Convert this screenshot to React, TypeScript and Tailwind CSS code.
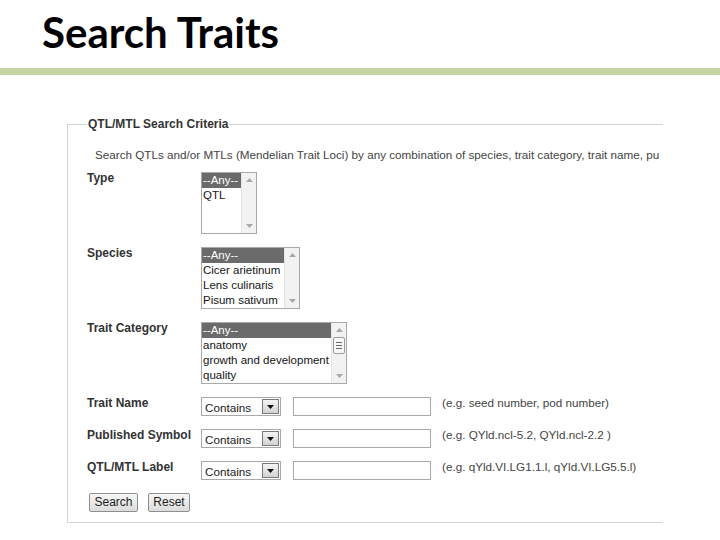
import React from "react";

function Arrow({ down }: { down?: boolean }) {
  return (
    <svg width="7" height="4" viewBox="0 0 7 4">
      {down ? (
        <path d="M0 0 L7 0 L3.5 4Z" fill="#a8a8a8" />
      ) : (
        <path d="M0 4 L3.5 0 L7 4Z" fill="#a8a8a8" />
      )}
    </svg>
  );
}

function Scrollbar({ thumb }: { thumb?: boolean }) {
  return (
    <div className="w-[15px] shrink-0 bg-[#f2f2f2] border-l border-[#e4e4e4] flex flex-col items-center">
      <div className="h-[14px] w-full flex items-center justify-center">
        <Arrow />
      </div>
      {thumb && (
        <div className="w-[12px] h-[17px] border border-[#9c9c9c] rounded-[2px] bg-[#f7f7f7] flex flex-col items-center justify-center gap-[2px]">
          <div className="w-[6px] h-px bg-[#6b6b6b]" />
          <div className="w-[6px] h-px bg-[#6b6b6b]" />
          <div className="w-[6px] h-px bg-[#6b6b6b]" />
        </div>
      )}
      <div className="flex-1" />
      <div className="h-[14px] w-full flex items-center justify-center">
        <Arrow down />
      </div>
    </div>
  );
}

function ListBox({ items, widthClass, thumb }: { items: string[]; widthClass: string; thumb?: boolean }) {
  return (
    <div className={`flex h-[62px] border border-[#a9a9a9] bg-white overflow-hidden ${widthClass}`}>
      <div className="flex-1 flex flex-col min-w-0">
        {items.map((it, i) => (
          <div
            key={it}
            className={`h-[15px] leading-[15px] text-[11.5px] pl-[1px] whitespace-nowrap ${
              i === 0 ? "bg-[#6b6b6b] text-white" : "text-[#151515]"
            }`}
          >
            {it}
          </div>
        ))}
      </div>
      <Scrollbar thumb={thumb} />
    </div>
  );
}

function ContainsSelect() {
  return (
    <div className="w-[80px] h-[19px] border border-[#a9a9a9] bg-white flex items-center justify-between pl-[3px] pr-[1px]">
      <span className="text-[11.7px] leading-[15px] text-[#1a1a1a] mt-[1px]">Contains</span>
      <div className="w-[17px] h-[15px] border border-[#7a7a7a] bg-gradient-to-b from-[#f4f4f4] to-[#d2d2d2] flex items-center justify-center">
        <svg width="7" height="4" viewBox="0 0 7 4">
          <path d="M0 0 L7 0 L3.5 4Z" fill="#111" />
        </svg>
      </div>
    </div>
  );
}

function TextRow({ label, hint }: { label: string; hint: string }) {
  return (
    <div className="flex items-start h-[19px]">
      <div className="w-[114px] shrink-0 text-[12px] leading-[12px] font-bold text-[#333]">{label}</div>
      <ContainsSelect />
      <div className="ml-[12px] w-[138px] h-[19px] border border-[#a9a9a9] bg-white" />
      <div className="ml-[11px] text-[11.7px] leading-[12px] text-[#444] whitespace-nowrap">{hint}</div>
    </div>
  );
}

function ListRow({ label, children }: { label: string; children: React.ReactNode }) {
  return (
    <div className="flex items-start">
      <div className="w-[114px] shrink-0 text-[12px] leading-[12px] font-bold text-[#333]">{label}</div>
      {children}
    </div>
  );
}

export default function App() {
  return (
    <div className="w-[720px] h-[540px] bg-white overflow-hidden font-['Liberation_Sans',Arial,sans-serif]">
      <div className="h-[68px] pl-[42px] pt-[8px]">
        <h1 className="font-['Lato',sans-serif] font-bold text-[42px] leading-[48px] text-black">
          Search Traits
        </h1>
      </div>
      <div className="h-[7px] bg-[#c5d5a4]" />
      <div className="ml-[67px] mt-[42px] w-[596px] overflow-hidden">
        <fieldset className="w-[640px] border border-[#d3d3d3] pl-[19px] pb-[10px]">
          <legend className="px-[1px] text-[12px] leading-[14px] font-bold text-[#333]">
            QTL/MTL Search Criteria
          </legend>
          <div className="flex flex-col gap-[13px]">
            <div className="mt-[16px] mb-[-3px] ml-[8px] w-[568px] overflow-hidden text-[11.7px] leading-[15px] text-[#444] whitespace-nowrap">
              Search QTLs and/or MTLs (Mendelian Trait Loci) by any combination of species, trait category, trait name, pu
            </div>
            <ListRow label="Type">
              <ListBox widthClass="w-[56px]" items={["--Any--", "QTL"]} />
            </ListRow>
            <ListRow label="Species">
              <ListBox
                widthClass="w-[99px]"
                items={["--Any--", "Cicer arietinum", "Lens culinaris", "Pisum sativum"]}
              />
            </ListRow>
            <ListRow label="Trait Category">
              <ListBox
                widthClass="w-[146px]"
                thumb
                items={["--Any--", "anatomy", "growth and development", "quality"]}
              />
            </ListRow>
            <TextRow label="Trait Name" hint="(e.g. seed number, pod number)" />
            <TextRow label="Published Symbol" hint="(e.g. QYld.ncl-5.2, QYld.ncl-2.2 )" />
            <TextRow label="QTL/MTL Label" hint="(e.g. qYld.VI.LG1.1.l, qYld.VI.LG5.5.l)" />
            <div className="flex gap-[10px] ml-[2px]">
              <button className="w-[49px] h-[19px] border border-[#8f8f8f] rounded-[2px] bg-gradient-to-b from-[#f6f6f6] to-[#dcdcdc] text-[12px] leading-[15px] text-[#222]">
                Search
              </button>
              <button className="w-[42px] h-[19px] border border-[#8f8f8f] rounded-[2px] bg-gradient-to-b from-[#f6f6f6] to-[#dcdcdc] text-[12px] leading-[15px] text-[#222]">
                Reset
              </button>
            </div>
          </div>
        </fieldset>
      </div>
    </div>
  );
}
